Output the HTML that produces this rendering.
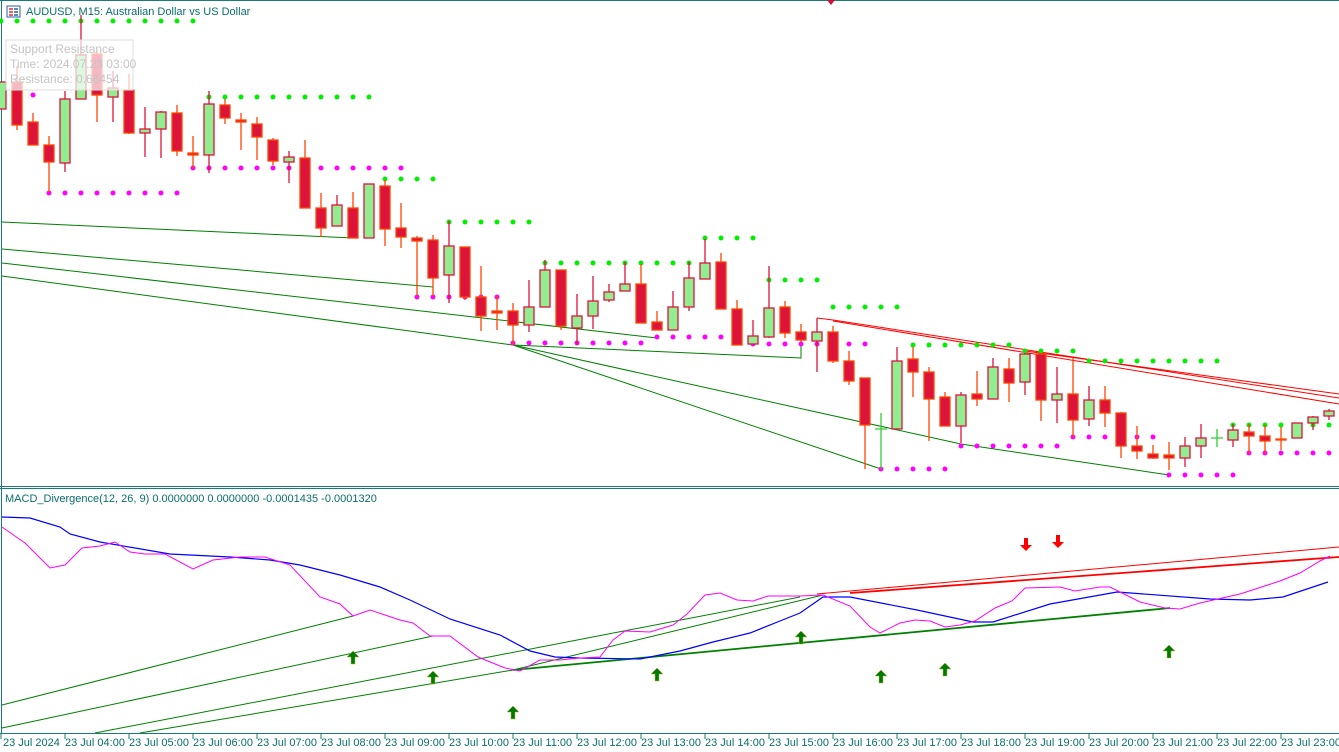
<!DOCTYPE html>
<html><head><meta charset="utf-8"><style>
html,body{margin:0;padding:0;background:#fff;width:1339px;height:752px;overflow:hidden}
svg{display:block}
text{font-family:"Liberation Sans",sans-serif;font-size:11px;fill:#0b6e6e}
</style></head><body>
<svg width="1339" height="752" viewBox="0 0 1339 752" xmlns="http://www.w3.org/2000/svg">
<rect width="1339" height="752" fill="#fff"/>
<!-- frame -->
<line x1="0" y1="0.5" x2="1339" y2="0.5" stroke="#1b7a7a"/>
<line x1="1.5" y1="0" x2="1.5" y2="734" stroke="#1b7a7a"/>
<line x1="0" y1="486.5" x2="1339" y2="486.5" stroke="#1b7a7a"/>
<line x1="0" y1="488.5" x2="1339" y2="488.5" stroke="#1b7a7a"/>
<line x1="0" y1="733.5" x2="1339" y2="733.5" stroke="#1b7a7a"/>
<path d="M827 0 L835 0 L831 5 Z" fill="#c8143c"/>
<!-- title icon -->
<rect x="7" y="6" width="13" height="11" fill="#fff" stroke="#2a5db0"/>
<path d="M9 9h4M9 12h4M9 15h4" stroke="#e03030" stroke-width="1.5"/>
<path d="M14 9h4M14 12h4M14 15h4" stroke="#2a5db0" stroke-width="1.5"/>
<text x="26" y="15">AUDUSD, M15:  Australian Dollar vs US Dollar</text>

<!-- green trendlines price -->
<g stroke="#008000" stroke-width="1" fill="none">
<path d="M2 222 L353 238"/>
<path d="M2 249 L433 287 L433 278"/>
<path d="M2 263 L657 338"/>
<path d="M2 276 L513 345"/>
<path d="M513 345 L801 358 L801 342"/>
<path d="M513 345 L961 444 L1169 475"/>
<path d="M513 345 L881 469"/>
</g>
<!-- red trendlines price -->
<g stroke="#ff0000" stroke-width="1" fill="none">
<path d="M817 318 L833 320 L1339 398"/>
<path d="M833 321 L1339 404"/>
<path d="M1025 351 L1339 394"/>
</g>

<!-- dots -->
<g stroke="#00ee00" stroke-width="5" stroke-linecap="round" stroke-dasharray="0 16">
<line x1="1" y1="21" x2="194" y2="21"/>
<line x1="209" y1="97" x2="370" y2="97"/>
<line x1="385" y1="179" x2="434" y2="179"/>
<line x1="449" y1="222" x2="530" y2="222"/>
<line x1="545" y1="263" x2="690" y2="263"/>
<line x1="705" y1="238" x2="754" y2="238"/>
<line x1="769" y1="280" x2="818" y2="280"/>
<line x1="833" y1="307" x2="898" y2="307"/>
<line x1="913" y1="345" x2="1010" y2="345"/>
<line x1="1025" y1="351" x2="1074" y2="351"/>
<line x1="1089" y1="361" x2="1218" y2="361"/>
<line x1="1233" y1="425" x2="1330" y2="425"/>
</g>
<g stroke="#ff00ff" stroke-width="5" stroke-linecap="round" stroke-dasharray="0 16">
<line x1="1" y1="95" x2="34" y2="95"/>
<line x1="49" y1="193" x2="178" y2="193"/>
<line x1="193" y1="168" x2="402" y2="168"/>
<line x1="417" y1="297" x2="498" y2="297"/>
<line x1="513" y1="343" x2="642" y2="343"/>
<line x1="657" y1="337" x2="738" y2="337"/>
<line x1="753" y1="344" x2="866" y2="344"/>
<line x1="881" y1="469" x2="946" y2="469"/>
<line x1="961" y1="446" x2="1058" y2="446"/>
<line x1="1073" y1="437" x2="1154" y2="437"/>
<line x1="1169" y1="475" x2="1234" y2="475"/>
<line x1="1249" y1="453" x2="1330" y2="453"/>
</g>

<!-- bear wicks -->
<path stroke="#ff4500" stroke-width="1.3" fill="none" d="M17 66V130M33 113V145M49 136V192M97 50V122M129 74V134M177 105V156M193 136V168M225 99V124M241 113V150M257 117V160M273 138V165M305 140V208M321 193V237M353 192V238M385 180V246M401 203V248M417 236V296M433 235V296M465 247V300M481 266V331M497 296V330M513 303V345M561 270V330M641 264V323M657 311V330M721 253V309M737 300V345M785 301V338M801 324V342M833 326V363M849 351V385M865 378V469M913 347V397M929 367V441M945 392V426M977 371V406M1009 358V402M1041 353V421M1073 358V437M1105 386V427M1121 412V458M1137 426V459M1153 445V459M1169 442V470M1249 424V453M1265 425V453M1281 427V450"/>
<!-- bull wicks -->
<path stroke="#dc143c" stroke-width="1.3" fill="none" d="M65 91V172M81 15V99M113 71V122M145 107V157M161 111V158M209 91V173M289 151V183M337 195V226M369 184V238M449 221V303M529 280V332M545 260V307M577 294V345M593 276V329M609 284V302M625 262V291M673 291V330M689 262V311M705 239V279M753 320V344M769 266V338M817 318V372M897 347V429M961 392V443M993 358V399M1025 353V395M1057 367V423M1089 386V426M1185 437V467M1201 424V458M1233 424V447M1297 423V438M1313 416V430M1329 409V420"/>
<!-- doji -->
<path stroke="#32cd32" stroke-width="1.3" fill="none" d="M881 413V469M875 429H887M1217 429V447M1211 438H1223"/>

<!-- bear bodies -->
<g fill="#dc143c" stroke="#ff4500" stroke-width="1.3">
<rect x="12" y="82" width="10" height="43"/><rect x="28" y="122" width="10" height="23"/><rect x="44" y="145" width="10" height="17"/><rect x="92" y="54" width="10" height="41"/><rect x="124" y="90" width="10" height="43"/><rect x="172" y="113" width="10" height="38"/><rect x="188" y="153" width="10" height="2"/><rect x="220" y="105" width="10" height="13"/><rect x="236" y="120" width="10" height="2"/><rect x="252" y="124" width="10" height="13"/><rect x="268" y="140" width="10" height="21"/><rect x="300" y="158" width="10" height="50"/><rect x="316" y="208" width="10" height="20"/><rect x="348" y="208" width="10" height="30"/><rect x="380" y="186" width="10" height="43"/><rect x="396" y="228" width="10" height="9"/><rect x="412" y="238" width="10" height="3"/><rect x="428" y="240" width="10" height="38"/><rect x="460" y="247" width="10" height="50"/><rect x="476" y="297" width="10" height="19"/><rect x="492" y="311" width="10" height="2"/><rect x="508" y="311" width="10" height="14"/><rect x="556" y="270" width="10" height="56"/><rect x="636" y="284" width="10" height="39"/><rect x="652" y="322" width="10" height="8"/><rect x="716" y="262" width="10" height="47"/><rect x="732" y="309" width="10" height="36"/><rect x="780" y="307" width="10" height="26"/><rect x="796" y="332" width="10" height="8"/><rect x="828" y="332" width="10" height="29"/><rect x="844" y="361" width="10" height="20"/><rect x="860" y="378" width="10" height="47"/><rect x="908" y="359" width="10" height="13"/><rect x="924" y="372" width="10" height="27"/><rect x="940" y="397" width="10" height="29"/><rect x="972" y="394" width="10" height="5"/><rect x="1004" y="369" width="10" height="14"/><rect x="1036" y="354" width="10" height="46"/><rect x="1068" y="394" width="10" height="26"/><rect x="1100" y="400" width="10" height="13"/><rect x="1116" y="413" width="10" height="33"/><rect x="1132" y="446" width="10" height="5"/><rect x="1148" y="454" width="10" height="4"/><rect x="1164" y="455" width="10" height="3"/><rect x="1244" y="432" width="10" height="4"/><rect x="1260" y="436" width="10" height="5"/><rect x="1276" y="439" width="10" height="1"/>
</g>
<!-- bull bodies -->
<g fill="#90ee90" stroke="#dc143c" stroke-width="1.3">
<rect x="-4" y="82" width="10" height="27"/><rect x="60" y="99" width="10" height="64"/><rect x="76" y="55" width="10" height="44"/><rect x="108" y="88" width="10" height="9"/><rect x="140" y="129" width="10" height="4"/><rect x="156" y="112" width="10" height="17"/><rect x="204" y="104" width="10" height="51"/><rect x="284" y="157" width="10" height="5"/><rect x="332" y="205" width="10" height="21"/><rect x="364" y="184" width="10" height="54"/><rect x="444" y="246" width="10" height="29"/><rect x="524" y="307" width="10" height="18"/><rect x="540" y="270" width="10" height="37"/><rect x="572" y="316" width="10" height="12"/><rect x="588" y="301" width="10" height="15"/><rect x="604" y="292" width="10" height="8"/><rect x="620" y="284" width="10" height="7"/><rect x="668" y="307" width="10" height="23"/><rect x="684" y="278" width="10" height="29"/><rect x="700" y="263" width="10" height="16"/><rect x="748" y="336" width="10" height="8"/><rect x="764" y="308" width="10" height="29"/><rect x="812" y="332" width="10" height="9"/><rect x="892" y="361" width="10" height="68"/><rect x="956" y="395" width="10" height="31"/><rect x="988" y="367" width="10" height="32"/><rect x="1020" y="354" width="10" height="28"/><rect x="1052" y="394" width="10" height="6"/><rect x="1084" y="400" width="10" height="19"/><rect x="1180" y="446" width="10" height="12"/><rect x="1196" y="438" width="10" height="8"/><rect x="1228" y="430" width="10" height="10"/><rect x="1292" y="423" width="10" height="15"/><rect x="1308" y="417" width="10" height="6"/><rect x="1324" y="411" width="10" height="5"/>
</g>

<!-- tooltip -->
<rect x="6" y="40" width="127" height="50" fill="#ffffff" fill-opacity="0.7" stroke="#dddddd"/>
<text x="10" y="53" style="fill:#c4c4c4;font-size:12px">Support  Resistance</text>
<text x="10" y="68" style="fill:#c4c4c4;font-size:12px">Time: 2024.07.23 03:00</text>
<text x="10" y="83" style="fill:#c4c4c4;font-size:12px">Resistance: 0.66454</text>

<!-- MACD panel -->
<text x="5" y="502">MACD_Divergence(12, 26, 9) 0.0000000 0.0000000 -0.0001435 -0.0001320</text>
<g stroke="#008000" stroke-width="1" fill="none">
<path d="M2 705 L353 616"/>
<path d="M2 728 L433 636"/>
<path d="M95 733 L800 597"/>
<path d="M140 733 L513 670"/>
<path d="M513 670 L823 595"/>
<path d="M513 670 L1170 608" stroke-width="1.8"/>
</g>
<g stroke="#ff0000" fill="none">
<path d="M817 594 L1339 547" stroke-width="1"/>
<path d="M850 593 L1339 557" stroke-width="1.8"/>
</g>
<polyline fill="none" stroke="#0000ff" stroke-width="1.2" points="2,517 30,518 60,527 70,534 100,542 170,554 230,557 270,560 300,565 340,575 380,587 410,600 450,619 500,635 530,651 555,657 580,658 640,659 680,651 713,642 750,633 780,621 800,613 823,597 850,597 917,610 973,622 993,622 1050,604 1117,592 1210,599 1250,600 1283,597 1328,582"/>
<polyline fill="none" stroke="#ff00ff" stroke-width="1" points="2,527 25,543 50,568 65,565 82,548 100,546 115,542 130,552 145,554 165,554 193,569 213,560 240,557 265,557 290,565 320,597 340,604 353,616 370,610 400,620 413,623 430,636 450,636 478,657 505,668 520,671 540,660 560,660 580,658 600,657 613,640 625,631 650,632 673,625 687,614 705,595 720,593 737,600 753,601 768,596 800,596 823,595 850,606 870,627 880,633 900,623 915,620 930,621 945,627 960,625 975,621 995,608 1012,601 1025,588 1060,587 1075,591 1100,587 1110,587 1140,602 1165,608 1180,609 1200,603 1240,594 1280,581 1300,573 1320,561 1330,556"/>
<!-- arrows -->
<g fill="#007a00" stroke="#b8b040" stroke-width="0.5">
<path d="M353 651 L359 657 L355 657 L355 664 L351 664 L351 657 L347 657 Z"/>
<path d="M433 671 L439 677 L435 677 L435 684 L431 684 L431 677 L427 677 Z"/>
<path d="M513 706 L519 712 L515 712 L515 719 L511 719 L511 712 L507 712 Z"/>
<path d="M657 668 L663 674 L659 674 L659 681 L655 681 L655 674 L651 674 Z"/>
<path d="M801 631 L807 637 L803 637 L803 644 L799 644 L799 637 L795 637 Z"/>
<path d="M881 670 L887 676 L883 676 L883 683 L879 683 L879 676 L875 676 Z"/>
<path d="M945 663 L951 669 L947 669 L947 676 L943 676 L943 669 L939 669 Z"/>
<path d="M1169 645 L1175 651 L1171 651 L1171 658 L1167 658 L1167 651 L1163 651 Z"/>
</g>
<g fill="#ff0000">
<path d="M1026 551 L1032 545 L1028 545 L1028 538 L1024 538 L1024 545 L1020 545 Z"/>
<path d="M1058 548 L1064 542 L1060 542 L1060 535 L1056 535 L1056 542 L1052 542 Z"/>
</g>

<!-- time axis -->
<g stroke="#1b7a7a">
<path d="M1 734v5M65 734v5M129 734v5M193 734v5M257 734v5M321 734v5M385 734v5M449 734v5M513 734v5M577 734v5M641 734v5M705 734v5M769 734v5M833 734v5M897 734v5M961 734v5M1025 734v5M1089 734v5M1153 734v5M1217 734v5M1281 734v5"/>
</g>
<text x="3" y="746">23 Jul 2024</text>
<text x="65" y="746">23 Jul 04:00</text>
<text x="129" y="746">23 Jul 05:00</text>
<text x="193" y="746">23 Jul 06:00</text>
<text x="257" y="746">23 Jul 07:00</text>
<text x="321" y="746">23 Jul 08:00</text>
<text x="385" y="746">23 Jul 09:00</text>
<text x="449" y="746">23 Jul 10:00</text>
<text x="513" y="746">23 Jul 11:00</text>
<text x="577" y="746">23 Jul 12:00</text>
<text x="641" y="746">23 Jul 13:00</text>
<text x="705" y="746">23 Jul 14:00</text>
<text x="769" y="746">23 Jul 15:00</text>
<text x="833" y="746">23 Jul 16:00</text>
<text x="897" y="746">23 Jul 17:00</text>
<text x="961" y="746">23 Jul 18:00</text>
<text x="1025" y="746">23 Jul 19:00</text>
<text x="1089" y="746">23 Jul 20:00</text>
<text x="1153" y="746">23 Jul 21:00</text>
<text x="1217" y="746">23 Jul 22:00</text>
<text x="1281" y="746">23 Jul 23:00</text>
</svg>
</body></html>
